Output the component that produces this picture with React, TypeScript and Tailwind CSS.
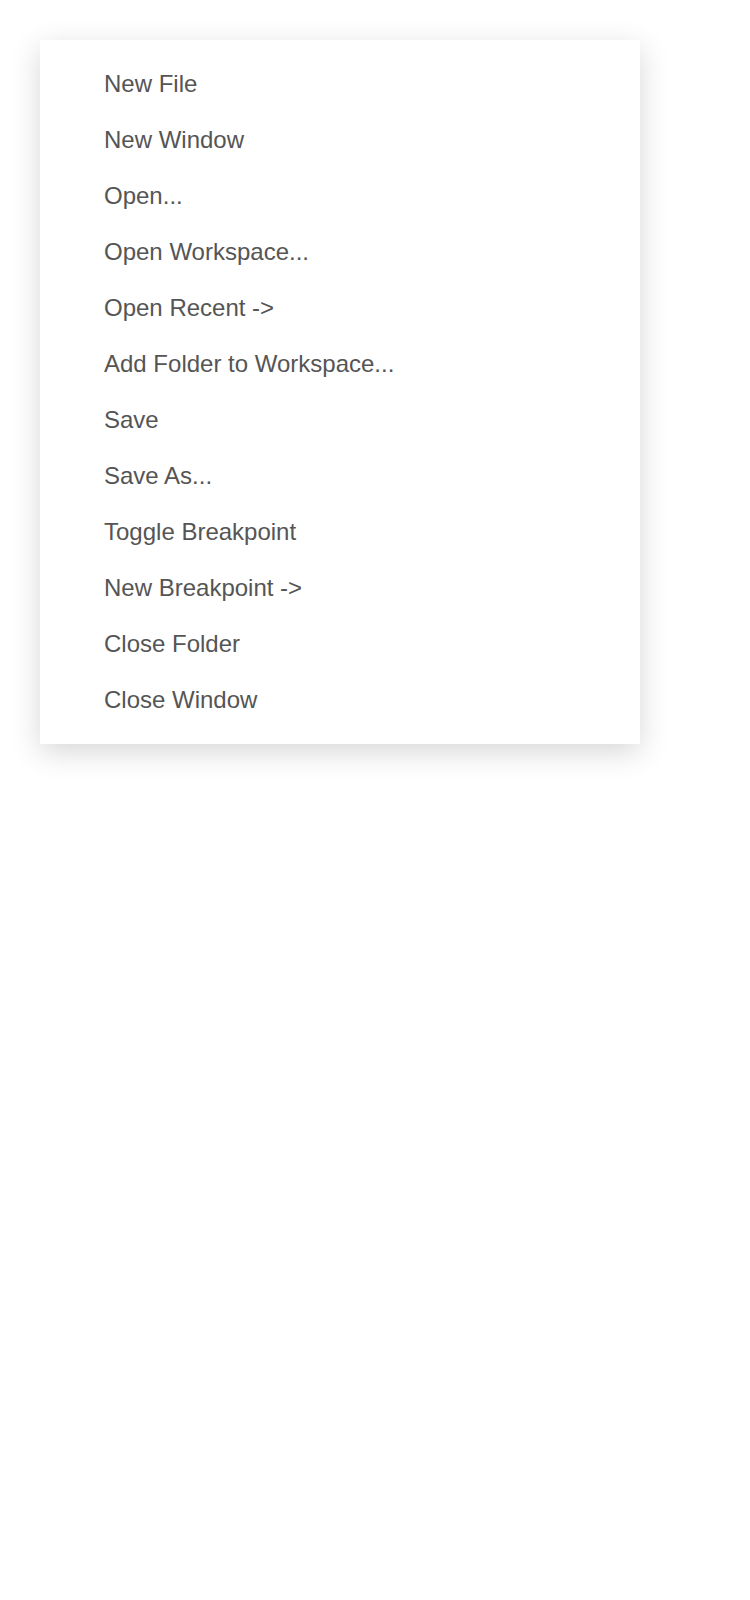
const ITEMS = [
  "New File",
  "New Window",
  "Open...",
  "Open Workspace...",
  "Open Recent ->",
  "Add Folder to Workspace...",
  "Save",
  "Save As...",
  "Toggle Breakpoint",
  "New Breakpoint ->",
  "Close Folder",
  "Close Window",
];

export default function App() {
  return (
    <div className="min-h-screen bg-white p-10 font-['Liberation_Sans',Arial,sans-serif]">
      <ul className="w-[600px] bg-white py-4 shadow-[0_8px_28px_rgba(0,0,0,0.16)]">
        {ITEMS.map((item) => (
          <li
            key={item}
            className="flex h-14 cursor-pointer items-center pl-16 text-[24px] text-[#555555] hover:bg-gray-100"
          >
            {item}
          </li>
        ))}
      </ul>
    </div>
  );
}
